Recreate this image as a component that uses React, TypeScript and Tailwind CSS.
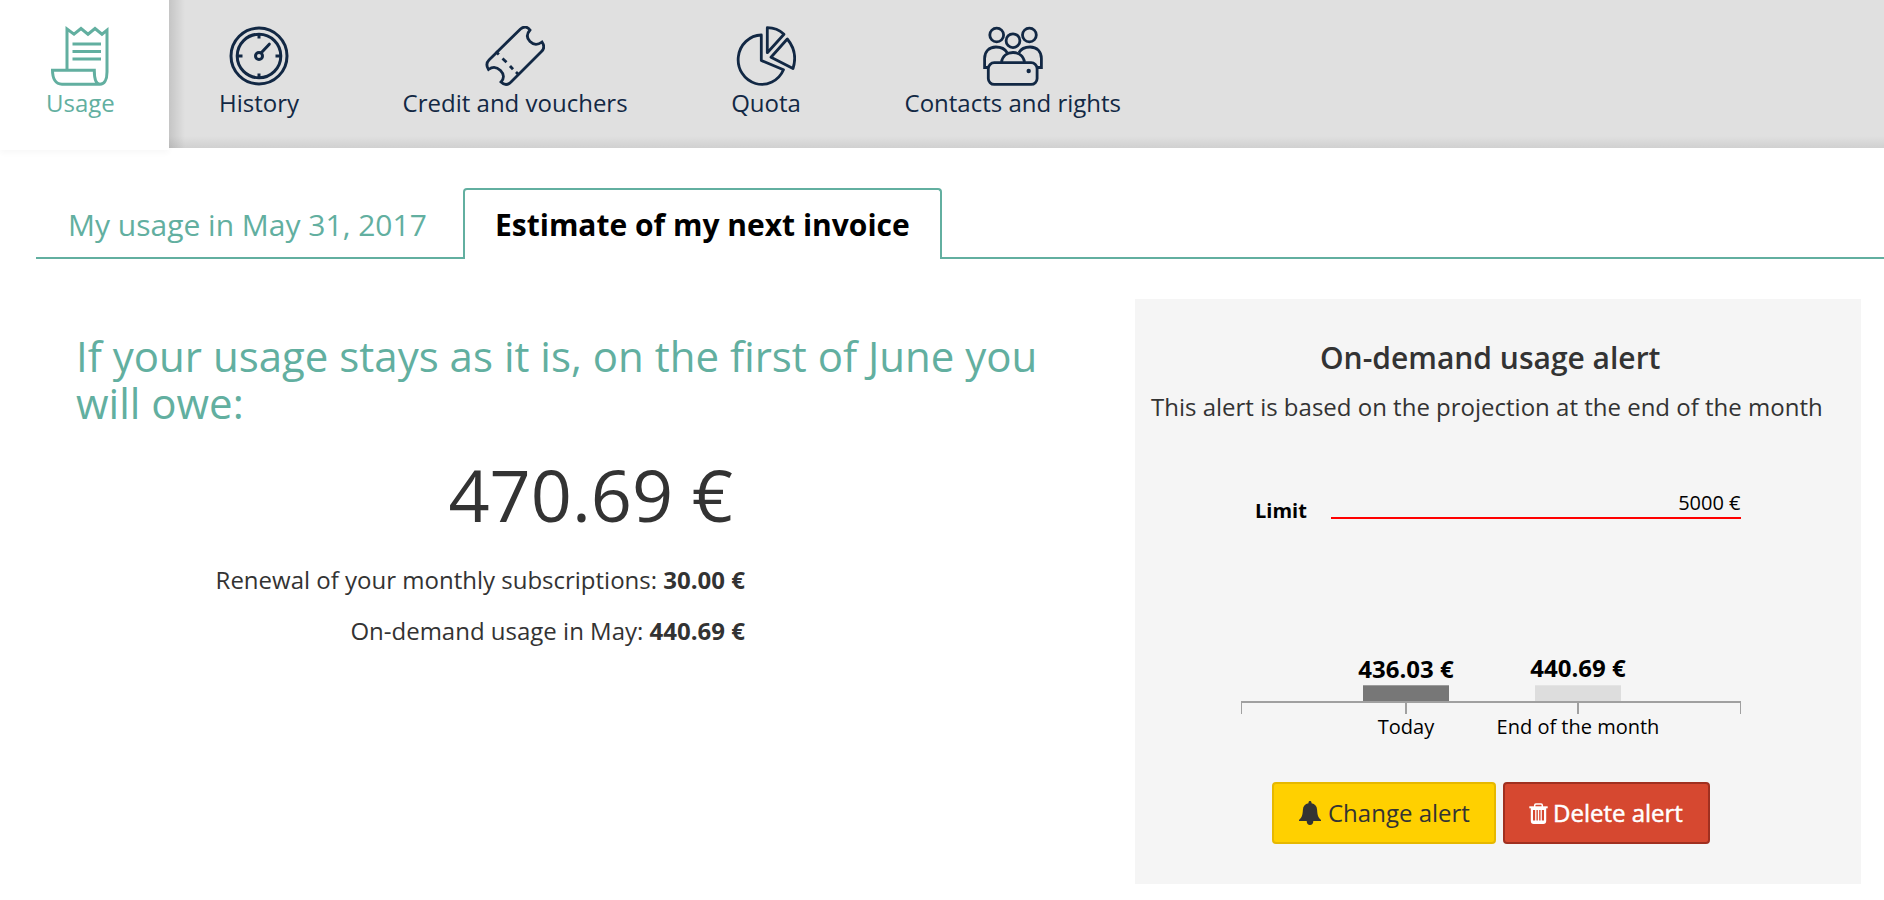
import { Fragment } from "react";
import type { ReactNode } from "react";

const iconClass = "h-[60px] w-[60px] shrink-0";

function UsageIcon() {
  return (
    <svg className={iconClass} viewBox="0 0 60 60" fill="none" stroke="currentColor" strokeWidth="3">
      <path d="M17 44V3l7 5.200 7-5.700 7 5.700 7-5.700 7 5.700 5-4V46c0 8-3 12.200-7 12.200S44.300 52 44.300 44.300H2.500c0 8 3 13.900 9.500 13.900H50" />
      <path d="M22.500 18h28.500M22.500 25.600h28.500M22.500 33h28.500" />
    </svg>
  );
}

function HistoryIcon() {
  return (
    <svg className={iconClass} viewBox="0 0 60 60" fill="none" stroke="currentColor" strokeWidth="3">
      <circle cx="30" cy="30" r="28" />
      <circle cx="30" cy="30" r="21.800" />
      <path d="M30 7v5.500M30 47.500v5M7 30h6.500M46.500 30h6" />
      <circle cx="30" cy="30" r="3.500" />
      <path d="M32.500 26.500 40.300 18.200" strokeLinecap="round" />
    </svg>
  );
}

function TicketIcon() {
  return (
    <svg className={iconClass} viewBox="0 0 60 60" fill="none" stroke="currentColor" strokeWidth="2.800">
      <path d="M35.500 3 4 34c-3 3-3 5.500-.5 9.500 4-3 8.500-2.500 12 1s4 8 .5 11.500c3.500 3.500 7 3 10 0L56.500 25.500c3-3 3-6 .5-9.500-4 3-8.500 3-12-.5s-3.500-7.500 0-11.500c-2.500-3.500-6-4-9.500-1Z" />
      <path d="m10.800 25.500 3 3M17.500 32.500l4 3.800M25 40l3 3.300M31 46l3 3" />
    </svg>
  );
}

function QuotaIcon() {
  return (
    <svg className={iconClass} viewBox="0 0 60 60" fill="none" stroke="currentColor" strokeWidth="2.800" strokeLinejoin="round">
      <path d="M25.300 9A23.700 24.700 0 1 0 47.500 43.800L25.300 34.500Z" />
      <path d="M31.300 1.700v25L48 8.300C43.500 4 38 1.700 31.300 1.700Z" />
      <path d="M51.300 13 35 31.200 57 42.500c3-9.500 2.200-20-5.700-29.500Z" />
    </svg>
  );
}

function ContactsIcon() {
  return (
    <svg className={iconClass} viewBox="0 0 60 60" fill="none" stroke="currentColor" strokeWidth="2.800">
      <circle cx="13.700" cy="9" r="6.900" />
      <circle cx="46.400" cy="9" r="6.900" />
      <circle cx="30" cy="14.700" r="6.900" />
      <path d="M6 41.500H1.600V32.500c0-7 4.400-11.500 11.400-11.500 5 0 9 2 11 5.500M54 41.500h4.400V32.500c0-7-4.400-11.500-11.400-11.500-5 0-9 2-11 5.500M18.500 36c1-6 5.500-9.500 11.500-9.500s10.500 3.500 11.500 9.500" />
      <rect x="5.300" y="36.700" width="48.800" height="21.700" rx="6" />
      <circle cx="45.700" cy="45" r="2.200" fill="currentColor" stroke="none" />
    </svg>
  );
}

function BellIcon() {
  return (
    <svg className="h-6 w-[22px]" viewBox="0 0 22 24" fill="currentColor">
      <path d="M11 0c.9 0 1.500.6 1.500 1.500v.8c3.600.7 5.400 3 5.600 6.500.3 5.700 1.200 7.900 3.900 10.200v1H14.300c0 2.500-1.300 4-3.300 4s-3.300-1.500-3.300-4H0v-1c2.700-2.300 3.600-4.500 3.900-10.200.2-3.500 2-5.800 5.600-6.500v-.8C9.500.6 10.100 0 11 0Z" />
    </svg>
  );
}

function TrashIcon() {
  return (
    <svg className="h-[21px] w-[19px]" viewBox="0 0 19 21" fill="none" stroke="currentColor">
      <path d="M.3 4.300h18.400" strokeWidth="2" />
      <path d="M5.700 4V2.200Q5.700 1 6.900 1h5.200q1.200 0 1.200 1.200V4" strokeWidth="1.500" />
      <path d="M2.900 4.500V18q0 1.800 1.800 1.800h9.600q1.800 0 1.800-1.800V4.500" strokeWidth="2.200" />
      <path d="M6.800 6.500v12M9.500 6.500v12M12.200 6.500v12" strokeWidth="1.300" />
      <path d="M3.300 6h12.400M4 18.600h11" strokeWidth="2.200" />
    </svg>
  );
}

function NavItem({ label, children }: { label: string; children: ReactNode }) {
  return (
    <a className="flex flex-col items-center whitespace-nowrap pt-[26px] text-[24px] leading-[34px]">
      {children}
      <span>{label}</span>
    </a>
  );
}

const bars = [
  { label: "Today", value: "436.03 €", x: 122, valueY: 178, fill: "#777777" },
  { label: "End of the month", value: "440.69 €", x: 294, valueY: 177, fill: "#dddddd" },
];

function AlertChart() {
  return (
    <svg className="block h-[280px] w-[500px]" viewBox="0 -20 500 280" fontSize="20" fill="#000">
      <text x="14" y="18" fontWeight="700">Limit</text>
      <text x="499.500" y="10" textAnchor="end">5000 €</text>
      <path d="M90 18h410" stroke="#ff0000" strokeWidth="2" />
      {bars.map((bar) => (
        <Fragment key={bar.label}>
          <rect x={bar.x} y="185.300" width="86" height="16" fill={bar.fill} />
          <text x={bar.x + 43} y={bar.valueY} textAnchor="middle" fontSize="24" fontWeight="700">{bar.value}</text>
          <path d={`M${bar.x + 43} 202v12`} stroke="#a0a0a0" strokeWidth="2" />
          <text x={bar.x + 43} y="234" textAnchor="middle">{bar.label}</text>
        </Fragment>
      ))}
      <path d="M0 202h500" stroke="#a0a0a0" strokeWidth="2" />
      <path d="M.5 202v12M499.500 202v12" stroke="#a0a0a0" />
    </svg>
  );
}

export default function App() {
  return (
    <div className="h-[900px] w-[1884px] overflow-hidden bg-white font-['Open_Sans',sans-serif] text-[24px] text-[#333]">
      <nav className="flex h-[148px] text-[#122844]">
        <div className="flex h-[150px] w-[169px] shrink-0 bg-white pl-[46px] text-[#62afa0] shadow-[0_3px_6px_rgba(0,0,0,0.03)]">
          <NavItem label="Usage"><UsageIcon /></NavItem>
        </div>
        <div className="flex flex-1 gap-[103.6px] bg-[#e0e0e0] bg-[linear-gradient(to_right,rgba(0,0,0,0.12),transparent_16px),linear-gradient(to_top,rgba(0,0,0,0.07),transparent_12px)] pl-[50px]">
          <NavItem label="History"><HistoryIcon /></NavItem>
          <NavItem label="Credit and vouchers"><TicketIcon /></NavItem>
          <NavItem label="Quota"><QuotaIcon /></NavItem>
          <NavItem label="Contacts and rights"><ContactsIcon /></NavItem>
        </div>
      </nav>

      <div className="mt-10 flex h-[71px] pl-9 text-[30px] leading-[74px]">
        <a className="w-[427px] border-b-2 border-[#62afa0] pl-8 text-[#62afa0]">My usage in May 31, 2017</a>
        <a className="w-[479px] rounded-t border-2 border-b-0 border-[#62afa0] pl-[30px] font-bold leading-[70px] text-black">Estimate of my next invoice</a>
        <div className="flex-1 border-b-2 border-[#62afa0]" />
      </div>

      <main className="flex pt-10">
        <section className="w-[1135px] pl-[76px] pt-[33px]">
          <h1 className="w-[1000px] text-[42px] leading-[47px] text-[#62afa0]">If your usage stays as it is, on the first of June you will owe:</h1>
          <div className="w-[669px] text-right">
            <p className="pr-3 pt-[19px] text-[72px] leading-[98px]">470.69 €</p>
            <p className="pt-5 leading-[34px]">Renewal of your monthly subscriptions: <b>30.00 €</b></p>
            <p className="pt-[17px] leading-[34px]">On-demand usage in May: <b>440.69 €</b></p>
          </div>
        </section>
        <aside className="h-[585px] w-[726px] bg-[#f5f5f5] pt-[38px]">
          <h2 className="pl-[185px] text-[30px] font-semibold leading-[42px]">On-demand usage alert</h2>
          <p className="whitespace-nowrap pl-4 pt-[11px] leading-[34px]">This alert is based on the projection at the end of the month</p>
          <div className="pl-[106px] pt-[56px]"><AlertChart /></div>
          <div className="flex gap-[7px] pl-[137px] pt-[22px]">
            <button className="flex h-[62px] w-[224px] items-center gap-[7px] rounded border-2 border-[#e6b800] bg-[#ffd000] pl-[25px]">
              <BellIcon />
              <span>Change alert</span>
            </button>
            <button className="flex h-[62px] w-[207px] items-center gap-[5px] rounded border-2 border-[#a03020] bg-[#d64830] pl-[24px] text-white">
              <TrashIcon />
              <span className="[-webkit-text-stroke:0.5px_white]">Delete alert</span>
            </button>
          </div>
        </aside>
      </main>
    </div>
  );
}
